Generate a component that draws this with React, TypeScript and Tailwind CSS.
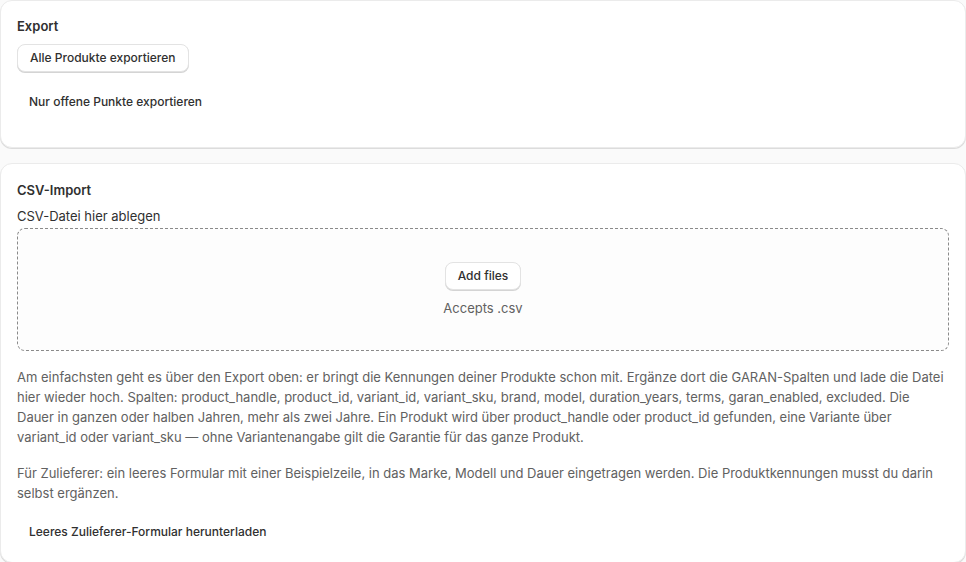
const font = { fontFamily: "Inter, 'Noto Sans', sans-serif" };

function Button({ children }: { children: React.ReactNode }) {
  return (
    <button className="h-7 rounded-lg border border-[#e3e3e3] bg-white px-3 text-[12px] font-medium text-[#303030] shadow-[0_1px_0_#d4d4d4]">
      {children}
    </button>
  );
}

function PlainButton({ children }: { children: React.ReactNode }) {
  return (
    <button className="h-7 rounded-lg px-3 text-[12px] font-medium text-[#303030]">
      {children}
    </button>
  );
}

function Card({ children, className = "" }: { children: React.ReactNode; className?: string }) {
  return (
    <div
      className={`rounded-xl border border-[#ebebeb] bg-white shadow-[0_1px_0_#dcdcdc] ${className}`}
    >
      {children}
    </div>
  );
}

export default function App() {
  return (
    <div style={font} className="min-h-screen w-[966px] bg-[#fafafa] text-[13px] text-[#303030]">
      <div className="flex flex-col gap-[15px]">
        <Card className="px-4 pb-[31px] pt-[15px]">
          <h2 className="text-[13px] font-semibold leading-5">Export</h2>
          <div className="mt-2 flex flex-col items-start gap-4">
            <Button>Alle Produkte exportieren</Button>
            <PlainButton>Nur offene Punkte exportieren</PlainButton>
          </div>
        </Card>

        <Card className="px-4 pb-4 pt-4">
          <h2 className="text-[13px] font-semibold leading-5">CSV-Import</h2>
          <p className="mt-[6px] mb-[2px] leading-5">CSV-Datei hier ablegen</p>
          <div className="flex h-[123px] flex-col items-center justify-center gap-2 rounded-lg border border-dashed border-[#8a8a8a] bg-[#fdfdfd]">
            <Button>Add files</Button>
            <span className="leading-5 text-[#616161]">Accepts .csv</span>
          </div>
          <p className="mt-4 leading-5 text-[#616161]">
            Am einfachsten geht es über den Export oben: er bringt die Kennungen deiner Produkte schon mit. Ergänze dort die GARAN-Spalten und lade die Datei hier wieder hoch. Spalten: product_handle, product_id, variant_id, variant_sku, brand, model, duration_years, terms, garan_enabled, excluded. Die Dauer in ganzen oder halben Jahren, mehr als zwei Jahre. Ein Produkt wird über product_handle oder product_id gefunden, eine Variante über variant_id oder variant_sku — ohne Variantenangabe gilt die Garantie für das ganze Produkt.
          </p>
          <p className="mt-4 leading-5 text-[#616161]">
            Für Zulieferer: ein leeres Formular mit einer Beispielzeile, in das Marke, Modell und Dauer eingetragen werden. Die Produktkennungen musst du darin selbst ergänzen.
          </p>
          <div className="mt-[15px]">
            <PlainButton>Leeres Zulieferer-Formular herunterladen</PlainButton>
          </div>
        </Card>
      </div>
    </div>
  );
}
